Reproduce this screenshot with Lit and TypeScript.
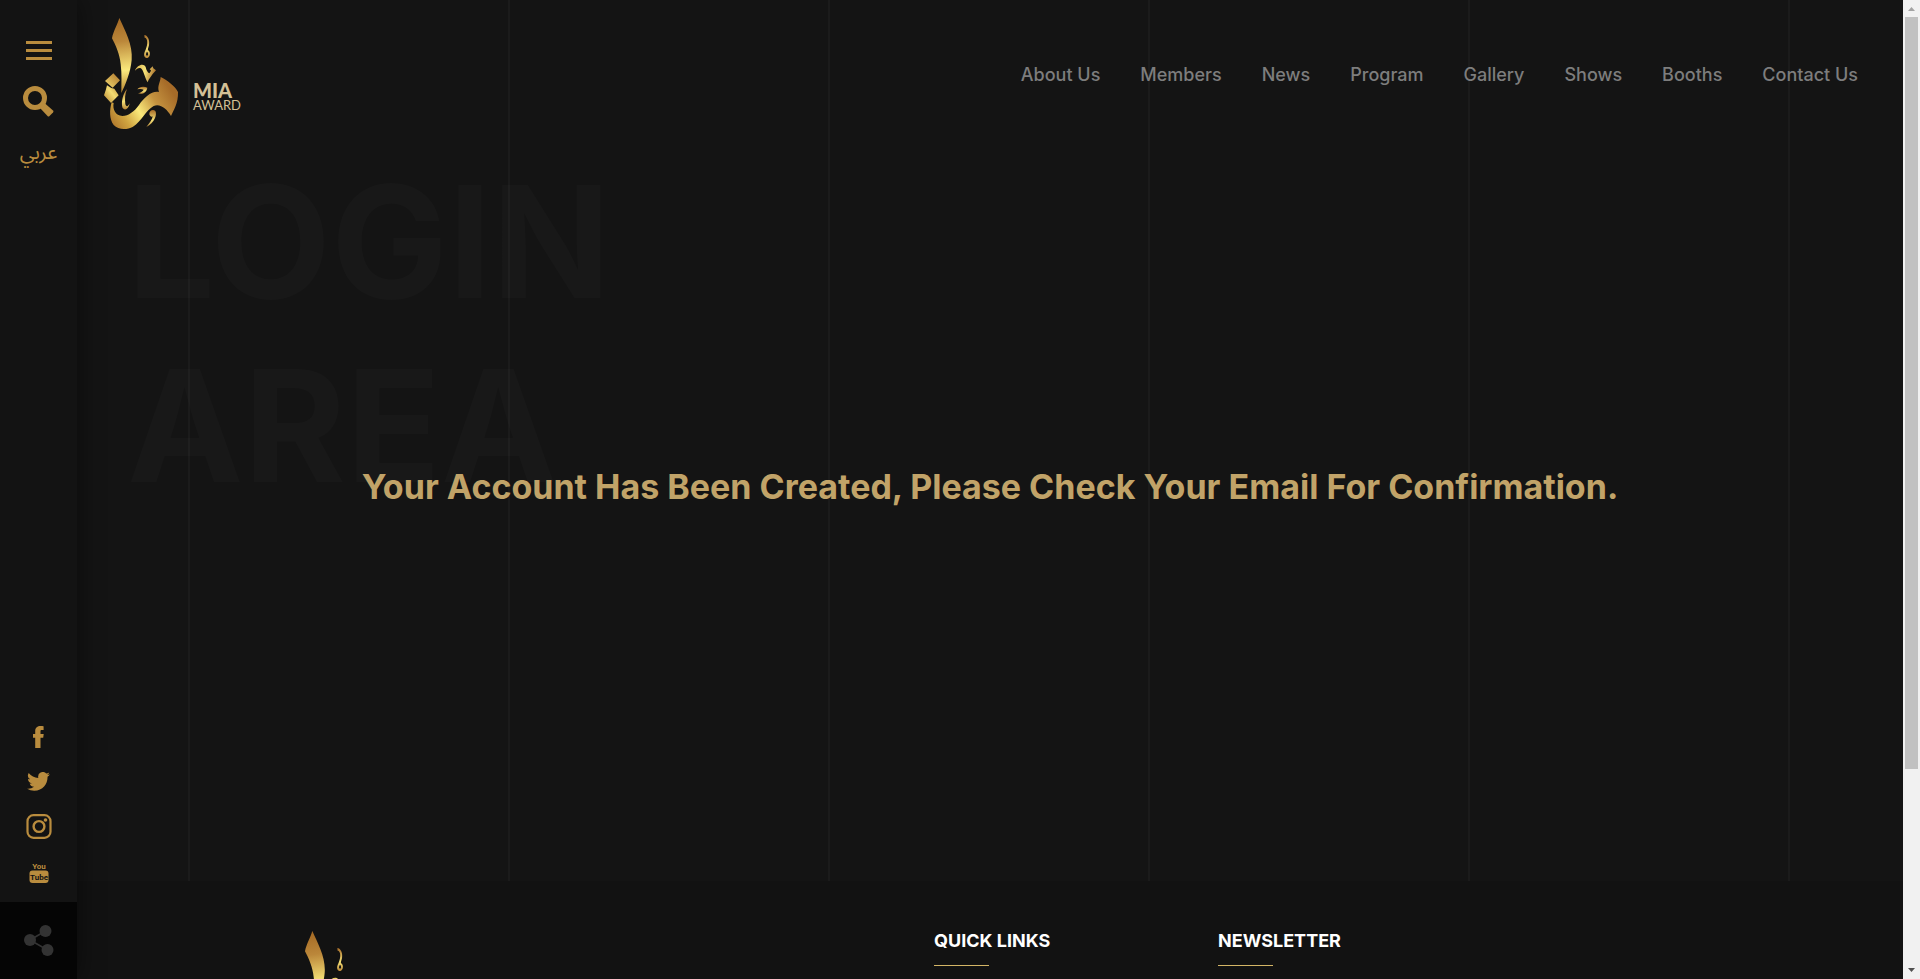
import { LitElement, html, css } from "lit";
import { customElement } from "lit/decorators.js";

@customElement("award-emblem")
class AwardEmblem extends LitElement {
  static styles = css`
    :host { display: block; }
    .emblem { display: block; width: 90px; height: 125px; }
  `;
  render() {
    return html`<svg class="emblem" viewBox="0 0 270 375" role="img" aria-label="MIA Award emblem">
      <defs>
        <linearGradient id="stem" gradientUnits="userSpaceOnUse" x1="62" y1="30" x2="92" y2="248">
          <stop offset="0" stop-color="#a56a24" /><stop offset=".3" stop-color="#bb873a" />
          <stop offset=".7" stop-color="#fbea7d" /><stop offset="1" stop-color="#b5812d" />
        </linearGradient>
        <linearGradient id="sweep" gradientUnits="userSpaceOnUse" x1="50" y1="350" x2="225" y2="235">
          <stop offset="0" stop-color="#ad742b" /><stop offset=".22" stop-color="#cfa33f" />
          <stop offset=".45" stop-color="#fae97b" /><stop offset=".72" stop-color="#c4923f" />
          <stop offset="1" stop-color="#a66b28" />
        </linearGradient>
        <linearGradient id="tick" gradientUnits="userSpaceOnUse" x1="120" y1="165" x2="185" y2="180">
          <stop offset="0" stop-color="#d9b14d" /><stop offset=".5" stop-color="#f6e278" /><stop offset="1" stop-color="#a66b28" />
        </linearGradient>
        <linearGradient id="gem" x1="0" y1="1" x2="1" y2="0">
          <stop offset="0" stop-color="#f3dc72" /><stop offset="1" stop-color="#ab7129" />
        </linearGradient>
        <linearGradient id="gemLow" x1="0" y1="1" x2="1" y2="0">
          <stop offset="0" stop-color="#b5802f" /><stop offset=".55" stop-color="#f3dc72" /><stop offset="1" stop-color="#c39339" />
        </linearGradient>
        <linearGradient id="drop" x1="0" y1="0" x2="0" y2="1">
          <stop offset="0" stop-color="#a66b28" /><stop offset=".6" stop-color="#f6e278" /><stop offset="1" stop-color="#b98738" />
        </linearGradient>
      </defs>
      <path fill="url(#stem)" d="M73 24C68 42 55 63 51 85C62 106 74 132 77 162C81 193 79 222 79 249C91 226 107 186 110 150C114 104 90 62 73 24Z" />
      <path fill="url(#gem)" d="M55 190L75 211L53 233L30 213Q40 204 55 190Z" />
      <path fill="url(#gemLow)" d="M36 226L49 234L58 236L71 256L48 279L27 256Q33 240 36 226Z" />
      <path fill="url(#sweep)" d="M50 277C43 300 43 328 56 345C70 360 96 360 114 350C140 334 152 301 176 288C197 280 216 298 228 318C236 300 250 280 249 246C240 228 216 210 197 201C196 217 186 228 192 246C170 242 148 262 132 285C118 304 101 318 82 318C62 317 52 298 56 279Z" />
      <path fill="url(#drop)" d="M96 237C84 250 78 275 82 292C87 303 101 300 104 280C98 292 93 290 91 282C89 266 90 252 96 237Z" />
      <path fill="url(#tick)" d="M120 182C126 165 146 158 152 171C154 181 158 187 163 190C166 187 167 185 168 181L164 178L173 169L175 175L183 181L173 192C169 199 161 206 158 217C148 201 146 178 136 174C130 173 124 177 120 182Z" />
      <path fill="url(#drop)" fill-rule="evenodd" d="M148 75C159 76 165 92 162 106C160 114 158 117 159 121C167 124 167 140 158 144C148 145 146 136 148 129C152 119 159 105 156 91C154 84 152 83 149 83ZM156 125C152 130 152 137 156 137C161 137 160 128 156 125Z" />
      <path fill="url(#drop)" d="M127 238C132 229 148 228 157 233C154 248 143 254 129 250C138 248 144 243 146 239C140 236 134 237 127 238Z" />
      <path fill="url(#drop)" d="M163 313C162 303 173 296 181 303C187 314 179 338 154 351C164 339 172 329 173 319C169 322 165 318 163 313Z" />
    </svg>`;
  }
}

@customElement("award-logo")
class AwardLogo extends LitElement {
  static styles = css`
    :host { display: block; }
    .logo { display: inline-flex; gap: 8px; color: #d3c096; text-decoration: none; font-family: Lato, sans-serif; }
    .name { display: flex; flex-direction: column; padding-top: 71px; }
    .top { font-size: 20px; line-height: 18px; font-weight: 900; }
    .sub { font-size: 13px; line-height: 12px; font-weight: 400; }
  `;
  render() {
    return html`<a class="logo" href="#home">
      <award-emblem></award-emblem>
      <span class="name"><span class="top">MIA</span><span class="sub">AWARD</span></span>
    </a>`;
  }
}

@customElement("side-rail")
class SideRail extends LitElement {
  static styles = css`
    :host { display: flex; flex-direction: column; justify-content: space-between; background: #131313; box-shadow: 0 0 26px rgba(0, 0, 0, 0.5); color: #b98c3e; }
    .tools, .social { display: flex; flex-direction: column; align-items: center; }
    .tools { padding-top: 41px; }
    .icon { display: block; padding: 0; border: 0; background: none; color: inherit; cursor: pointer; }
    .icon svg { display: block; fill: currentColor; }
    .find { margin-top: 26px; }
    .lang { margin-top: 20px; color: inherit; font: 20px/32px "Noto Sans Arabic", "DejaVu Sans", sans-serif; text-decoration: none; }
    .social { gap: 20px; padding-bottom: 18px; }
    .social .icon { display: grid; place-items: center; width: 26px; height: 25px; }
    .word { font: 700 8px Roboto, sans-serif; }
    .dark { fill: #131313; }
    .share { display: grid; place-items: center; width: 100%; height: 77px; background: #050505; color: #333; }
  `;
  render() {
    return html`
      <div class="tools">
        <button class="icon" aria-label="Menu">
          <svg width="26" height="19" viewBox="0 0 26 19"><path d="M0 0h26v3H0zM0 8h26v3H0zM0 16h26v3H0z" /></svg>
        </button>
        <button class="icon find" aria-label="Search">
          <svg width="31" height="31" viewBox="0 0 31 31"><path fill-rule="evenodd" d="M12 0a12 12 0 1 1 0 24a12 12 0 0 1 0-24zM12 5a7 7 0 1 0 0 14a7 7 0 0 0 0-14z" /><path d="M21.5 17L30 24.500Q31 25.500 30 26.500L26.500 30Q25.500 31 24.500 30L17 22Z" /></svg>
        </button>
        <a class="lang" href="#ar" lang="ar">عربي</a>
      </div>
      <div>
        <div class="social">
          <a class="icon" href="#facebook" aria-label="Facebook">
            <svg width="11" height="22" viewBox="0 0 11 22"><path d="M10.600.2V4H8.500C7.600 4 7.500 4.700 7.500 5.600V8h3.200l-.5 3.800H7.500V22H2.200V11.800H0V8h2.200V5C2.200 1.800 4.500 0 7.500 0c1.400 0 2.700.1 3.100.2z" /></svg>
          </a>
          <a class="icon" href="#twitter" aria-label="Twitter">
            <svg width="23" height="19" viewBox="0 0 24 20"><path d="M24 2.400a9.800 9.800 0 0 1-2.800.8A5 5 0 0 0 23.300.5a9.900 9.900 0 0 1-3.100 1.200 4.900 4.900 0 0 0-8.400 4.500A14 14 0 0 1 1.700 1a4.900 4.900 0 0 0 1.500 6.600A4.900 4.900 0 0 1 1 7v.1a4.900 4.900 0 0 0 3.900 4.800 5 5 0 0 1-2.200.1 4.900 4.900 0 0 0 4.600 3.400A9.900 9.900 0 0 1 0 17.500a14 14 0 0 0 7.500 2.200c9.100 0 14-7.500 14-14v-.6A10 10 0 0 0 24 2.400z" /></svg>
          </a>
          <a class="icon" href="#instagram" aria-label="Instagram">
            <svg width="26" height="25" viewBox="0 0 26 25"><rect x="1.500" y="1.200" width="23" height="22.600" rx="6" fill="none" stroke="currentColor" stroke-width="2.200" /><circle cx="13" cy="12.500" r="5.400" fill="none" stroke="currentColor" stroke-width="2.400" /><circle cx="19.500" cy="6" r="1.800" /></svg>
          </a>
          <a class="icon" href="#youtube" aria-label="YouTube">
            <svg width="20" height="22" viewBox="0 0 20 22"><rect x=".5" y="9.500" width="19" height="12.500" rx="3" /><text class="word" x="10" y="8" text-anchor="middle">You</text><text class="word dark" x="10" y="19" text-anchor="middle">Tube</text></svg>
          </a>
        </div>
        <button class="icon share" aria-label="Share">
          <svg width="30" height="31" viewBox="0 0 30 31"><path d="M6 15L21.500 6M6 15L23.500 25" stroke="currentColor" stroke-width="1.600" /><circle cx="6" cy="15" r="6" /><circle cx="21.500" cy="6" r="6" /><circle cx="23.500" cy="25" r="6" /></svg>
        </button>
      </div>`;
  }
}

@customElement("scroll-track")
class ScrollTrack extends LitElement {
  static styles = css`
    :host { display: grid; grid-template-rows: 17px 39fr 10fr 17px; background: #f1f1f1; }
    .arrow { display: block; width: 17px; height: 17px; }
    .up { fill: #a3a3a3; }
    .down { fill: #505050; grid-row: 4; }
    .thumb { margin: 0 2px; background: #c1c1c1; }
  `;
  render() {
    return html`
      <svg class="arrow up" viewBox="0 0 17 17"><path d="M5 11L8.500 7L12 11Z" /></svg>
      <div class="thumb"></div>
      <svg class="arrow down" viewBox="0 0 17 17"><path d="M5 6L8.500 10L12 6Z" /></svg>`;
  }
}

@customElement("app-root")
class AppRoot extends LitElement {
  static styles = css`
    :host { display: grid; grid-template-columns: 77px minmax(0, 1fr) 17px; grid-template-rows: minmax(0, 1fr); height: 100vh; overflow: hidden; background: #141414; font-family: Inter, sans-serif; }
    side-rail { z-index: 2; }
    .page { overflow: hidden; }
    .stage { min-height: 90vh; background: repeating-linear-gradient(90deg, transparent 0 111px, #1b1b1b 111px 113px, transparent 113px 320px); }
    .header { display: flex; justify-content: space-between; height: 150px; padding: 10px 45px 0 18px; box-sizing: border-box; }
    .nav { display: flex; gap: 40px; padding-top: 53px; }
    .link { color: #7d7d7d; font-size: 18px; line-height: 24px; font-weight: 500; text-decoration: none; white-space: nowrap; }
    .hero { display: grid; }
    .ghost, .message { grid-area: 1 / 1; margin: 0; font-weight: 700; }
    .ghost { width: min-content; padding-left: 50px; color: rgba(255, 255, 255, 0.02); font-size: 156px; line-height: 184px; text-transform: uppercase; }
    .message { padding-top: 313px; color: #c1a368; font-size: 34px; line-height: 48px; text-align: center; }
    .footer { display: grid; grid-template-columns: 646px 284px 1fr; padding: 42px 0 0 211px; min-height: 260px; box-sizing: border-box; background: #121212; }
    .heading { margin: 0; padding-top: 6px; color: #fff; font-size: 18px; line-height: 24px; font-weight: 700; text-transform: uppercase; }
    .heading::after { content: ""; display: block; width: 55px; height: 1px; margin-top: 12px; background: #d3b566; }
  `;
  static links = ["About Us", "Members", "News", "Program", "Gallery", "Shows", "Booths", "Contact Us"];
  render() {
    return html`
      <side-rail></side-rail>
      <div class="page">
        <main class="stage">
          <header class="header">
            <award-logo></award-logo>
            <nav class="nav">
              ${AppRoot.links.map((label) => html`<a class="link" href="#${label.toLowerCase().replace(" ", "-")}">${label}</a>`)}
            </nav>
          </header>
          <section class="hero">
            <h1 class="ghost">Login Area</h1>
            <h2 class="message">Your Account Has Been Created, Please Check Your Email For Confirmation.</h2>
          </section>
        </main>
        <footer class="footer">
          <award-emblem></award-emblem>
          <h3 class="heading">Quick Links</h3>
          <h3 class="heading">Newsletter</h3>
        </footer>
      </div>
      <scroll-track aria-hidden="true"></scroll-track>`;
  }
}
